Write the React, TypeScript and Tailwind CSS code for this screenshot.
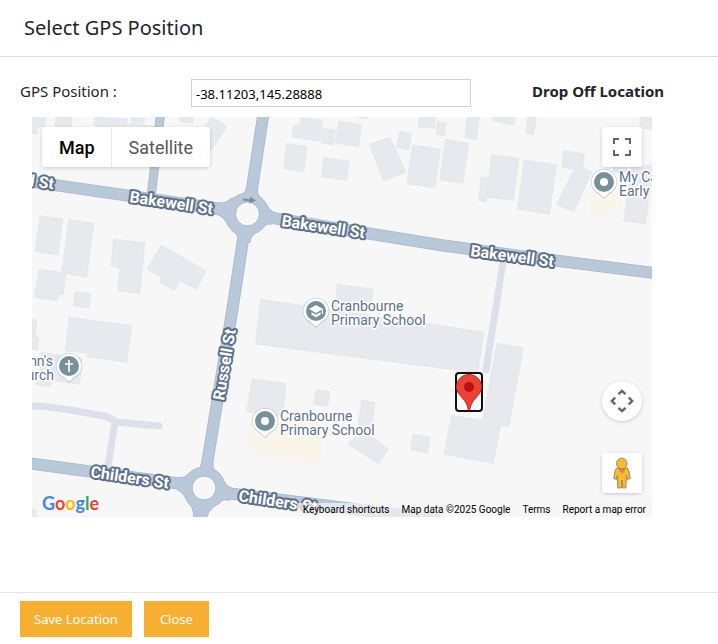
import React, { useState } from "react";

type Pin = { x: number; y: number; kind: "dot" | "school" | "church" };

const pins: Pin[] = [
  { x: 316, y: 311, kind: "school" },
  { x: 265, y: 421, kind: "dot" },
  { x: 69, y: 366, kind: "church" },
  { x: 604, y: 182, kind: "dot" },
];

const streets = [
  { x: -30, y: 177, angle: 8.5, name: "Bakewell St" },
  { x: 129, y: 202, angle: 8.5, name: "Bakewell St" },
  { x: 281, y: 226, angle: 8.5, name: "Bakewell St" },
  { x: 470, y: 256, angle: 7.5, name: "Bakewell St" },
  { x: 224, y: 401, angle: -80.5, name: "Russell St" },
  { x: 90, y: 477, angle: 8.5, name: "Childers St" },
  { x: 238, y: 501, angle: 8.5, name: "Childers St" },
];

const places = [
  { x: 331, y: 311, lines: ["Cranbourne", "Primary School"] },
  { x: 280, y: 421, lines: ["Cranbourne", "Primary School"] },
  { x: 619, y: 182, lines: ["My Canvas", "Early Learning"] },
];

// Building footprints, grouped by map tile; each tile is drawn at three units per pixel.
const tiles = [
  {
    at: "translate(30 115) scale(0.3333)",
    shapes: [
      "5,5 48,5 45,35 22,35 20,57 5,55",
      "78,5 125,5 125,45 72,45",
      "195,5 240,10 292,12 290,45 240,45 192,30",
      "305,8 345,10 340,25 303,20",
      "298,24 380,35 380,45 296,45",
      "450,5 490,5 488,24 448,20",
      "545,5 590,35 540,112 520,40",
      "30,302 98,312 84,420 15,410",
      "117,314 191,325 170,486 95,474",
      "28,462 108,475 100,538 86,536 82,558 13,547",
      "135,530 182,537 178,579 131,573",
      "250,373 345,383 329,535 263,527 270,458 244,454",
      "394,390 528,468 499,524 450,497 434,526 389,503 392,487 352,462",
    ],
  },
  {
    at: "translate(230 115) scale(0.3333)",
    shapes: [
      "213,8 278,16 270,78 186,66 192,30 209,32",
      "280,40 316,45 310,90 274,84",
      "327,18 395,30 386,96 316,84",
      "169,86 230,94 222,170 162,160",
      "281,128 357,138 350,196 275,186",
      "418,88 480,67 528,172 460,197",
      "510,48 545,56 536,105 500,95",
      "568,5 615,5 614,40 564,36",
      "380,5 410,5 410,11",
      "548,90 631,103 615,218 531,206",
      "322,508 428,522 424,590 316,580",
      "92,553 761,651 744,774 77,687",
    ],
  },
  {
    at: "translate(440 115) scale(0.3333)",
    shapes: [
      "17,72 86,85 68,205 0,194",
      "-8,20 18,24 12,63 -12,58",
      "82,5 118,5 110,74 74,68",
      "158,5 225,5 222,30 185,24 160,17",
      "263,5 289,5 280,60 259,55",
      "155,120 236,130 220,256 140,246",
      "124,186 146,188 138,260 116,257",
      "253,135 350,150 328,298 232,283",
      "372,107 434,117 428,155 404,150 400,162 366,157",
      "410,149 456,172 400,291 350,268",
      "600,5 636,5 636,43 600,38",
      "520,140 560,140 560,178 520,170",
      "574,150 640,152 616,327 552,317",
    ],
  },
  {
    at: "translate(30 310) scale(0.3333)",
    shapes: [
      "118,22 305,47 290,157 172,140 174,130 106,122",
      "5,28 20,30 16,80 27,84 22,120 5,117",
      "35,127 155,145 155,180 148,223 75,212 66,212 60,230 18,224 30,190",
      "5,597 20,600 18,625 5,625",
    ],
  },
  {
    at: "translate(230 310) scale(0.3333)",
    shapes: [
      "66,207 168,221 158,320 50,305",
      "258,239 300,245 293,289 251,282",
      "395,271 435,277 425,350 385,343",
      "354,402 385,370 425,380 475,418 446,462",
      "549,373 600,382 593,430 542,420",
    ],
  },
  {
    at: "translate(440 310) scale(0.3333)",
    shapes: ["171,100 250,114 206,351 182,346 160,460 12,433 35,316 128,332"],
  },
];

const roads = [
  { d: "M20 180L217 208.5", w: 12 },
  { d: "M273 218L440 245L520 256L670 275", w: 12 },
  { d: "M217 208.5L247 214L273 218", w: 12 },
  { d: "M264 110L251 195L247 214L243 240L232 312L206 470L204 488L199 525", w: 12 },
  { d: "M20 462L182 484L204 488L230 493.5L330 506L440 520", w: 12 },
  { d: "M161 110L151 198", w: 9 },
];

const roundabouts = [
  { x: 247.5, y: 214 },
  { x: 204, y: 488 },
];

const flares = [
  "M246 190L257 190Q257 195 261 198Q266 203 269 209L273 212L271 224Q265 223 260 229Q250 235 250 242L238 242Q240 235 233 231Q228 226 226 221Q222 215 216 214L218 203Q226 204 231 199Q246 195 246 190Z",
  "M202 464L213 464Q211 469 217 472Q222 476 224 482Q227 487 231 488L229 500Q222 498 219 503Q208 508 206 519L194 519Q195 508 188 502Q184 492 178 490L180 478Q186 478 190 473Q201 470 202 464Z",
];

function MapPin({ x, y, kind }: Pin) {
  return (
    <g transform={`translate(${x} ${y})`}>
      <path
        d="M0 16.500C-1.500 16.500-2.500 14.500-4 13C-8 10.500-13 7-13 0A13 13 0 0 1 13 0C13 7 8 10.500 4 13C2.500 14.500 1.500 16.500 0 16.500Z"
        fill="#b4c1d2"
      />
      <path
        d="M0 15.500C-1.500 15.500-2.500 13.500-4 12C-8 9.500-12.500 6.500-12.500 0A12.500 12.500 0 0 1 12.500 0C12.500 6.500 8 9.500 4 12C2.500 13.500 1.500 15.500 0 15.500Z"
        fill="#fff"
      />
      <circle r="10" fill="#78909c" />
      {kind === "dot" && <circle r="4" fill="#fff" />}
      {kind === "school" && (
        <g fill="#fff">
          <path d="M0-6L-7-2L0 2L5.800-1.300V3H7V-2Z" />
          <path d="M-4.500 1.200V3.800L0 6.300L4.500 3.800V1.200L0 3.700Z" />
        </g>
      )}
      {kind === "church" && <path d="M-.8-6H.8V-2.800H4V-1.200H.8V6H-.8V-1.200H-4V-2.800H-.8Z" fill="#fff" />}
    </g>
  );
}

function MapDrawing() {
  return (
    <svg
      className="block h-full w-full"
      viewBox="32 117 620 400"
      preserveAspectRatio="xMinYMin slice"
      aria-label="Street map"
    >
      <g fill="#faf5e9">
        <path d="M251 413L324 425L320 464L247 452Z" />
        <path d="M592 190L622 195L620 211L608 210L606 217L589 214Z" />
      </g>
      {tiles.map((tile) => (
        <g key={tile.at} transform={tile.at} fill="#e8e9ee" stroke="#e0e2e9" strokeWidth="2">
          {tile.shapes.map((points) => (
            <polygon key={points} points={points} />
          ))}
        </g>
      ))}
      <g fill="none" stroke="#dbe0ea" strokeWidth="7" strokeLinecap="round" strokeLinejoin="round">
        <path d="M503 262L486 370" />
        <path d="M28 407Q38 405 48 407L70 410L104 416Q109 417 116 422L159 426" />
        <path d="M115 422L108 466" />
      </g>
      <g fill="none" stroke="#a3b7c9">
        {roads.map((road) => (
          <path key={road.d} d={road.d} strokeWidth={road.w} />
        ))}
        {flares.map((d) => (
          <path key={d} d={d} strokeWidth="1.500" />
        ))}
        {roundabouts.map((r) => (
          <circle key={r.x} cx={r.x} cy={r.y} r="20.500" strokeWidth="1.500" />
        ))}
      </g>
      <g fill="#b9c9d9">
        {flares.map((d) => (
          <path key={d} d={d} />
        ))}
        {roundabouts.map((r) => (
          <circle key={r.x} cx={r.x} cy={r.y} r="20.500" />
        ))}
      </g>
      <g fill="none" stroke="#b9c9d9">
        {roads.map((road) => (
          <path key={road.d} d={road.d} strokeWidth={road.w - 1.5} />
        ))}
      </g>
      <g fill="#f7f7f7" stroke="#a3b7c9">
        {roundabouts.map((r) => (
          <circle key={r.x} cx={r.x} cy={r.y} r="12" />
        ))}
      </g>
      <path d="M243 198.500L250 199.200V196.500L256 200.500L249.500 203.500V201.200L243 200.500Z" fill="#78909c" />
      <g
        className="font-['Roboto',sans-serif] text-[16px] font-bold"
        fill="#fff"
        stroke="#5b708a"
        strokeWidth="4"
        strokeLinejoin="round"
        paintOrder="stroke"
      >
        {streets.map((s) => (
          <text key={`${s.x}-${s.y}`} transform={`translate(${s.x} ${s.y}) rotate(${s.angle})`}>
            {s.name}
          </text>
        ))}
      </g>
      {pins.map((p) => (
        <MapPin key={`${p.x}-${p.y}`} {...p} />
      ))}
      <g
        className="font-['Roboto',sans-serif] text-[14px]"
        fill="#5b728c"
        stroke="#fff"
        strokeWidth="3"
        strokeLinejoin="round"
        paintOrder="stroke"
      >
        {places.map((p) => (
          <text key={`${p.x}-${p.y}`}>
            <tspan x={p.x} y={p.y}>
              {p.lines[0]}
            </tspan>
            <tspan x={p.x} y={p.y + 14}>
              {p.lines[1]}
            </tspan>
          </text>
        ))}
        <text textAnchor="end">
          <tspan x="53" y="366">
            St John's
          </tspan>
          <tspan x="54" y="380">
            Church
          </tspan>
        </text>
      </g>
    </svg>
  );
}

function GoogleLogo() {
  return (
    <a
      href="#google"
      aria-label="Google"
      className="absolute bottom-0 left-2.5 font-['Lato',sans-serif] text-[18px] leading-7 font-bold"
    >
      <span className="text-[#4285f4]">G</span>
      <span className="text-[#ea4335]">o</span>
      <span className="text-[#fbbc04]">o</span>
      <span className="text-[#4285f4]">g</span>
      <span className="text-[#34a853]">l</span>
      <span className="text-[#ea4335]">e</span>
    </a>
  );
}

function MapView() {
  return (
    <div className="relative h-[400px] overflow-hidden bg-[#f7f7f7] font-['Roboto',sans-serif]">
      <MapDrawing />

      <button
        type="button"
        aria-label="Selected position"
        className="absolute top-[255px] left-[423px] flex h-10 w-7 items-center justify-center rounded-[4px] border-2 border-[#101010]"
      >
        <svg viewBox="0 0 26 37" className="h-[37px] w-[26px] shrink-0">
          <path
            d="M13 .5C6 .5.500 6 .500 13C.500 17 2.500 19.500 5 22.500C8.500 26.500 11 29 12.200 35.500Q12.400 36.500 13 36.500T13.800 35.500C15 29 17.500 26.500 21 22.500C23.500 19.500 25.500 17 25.500 13C25.500 6 20 .5 13 .5Z"
            fill="#ea4335"
            stroke="#c5221f"
          />
          <circle cx="13" cy="13" r="5" fill="#b31412" />
        </svg>
      </button>

      <div className="absolute top-2.5 left-2.5 flex h-10 rounded-xs bg-white text-[18px] shadow-[0_1px_4px_-1px_rgba(0,0,0,0.3)]">
        <button type="button" className="pr-4 pl-[17px] font-medium text-black">
          Map
        </button>
        <button type="button" className="border-l border-[#e8e8e8] px-[17px] text-[#565656]">
          Satellite
        </button>
      </div>

      <button
        type="button"
        aria-label="Toggle fullscreen view"
        className="absolute top-2.5 right-2.5 flex size-10 items-center justify-center rounded-xs bg-white shadow-[0_1px_4px_-1px_rgba(0,0,0,0.3)]"
      >
        <svg viewBox="0 0 18 18" className="size-[18px]" fill="#666">
          <path d="M0 0V6H2V2H6V0ZM16 0H12V2H16V6H18V0ZM16 16H12V18H18V12H16ZM2 12H0V18H6V16H2Z" />
        </svg>
      </button>

      <button
        type="button"
        aria-label="Map camera controls"
        className="absolute right-2.5 bottom-24 flex size-10 items-center justify-center rounded-full bg-white shadow-[0_1px_4px_-1px_rgba(0,0,0,0.3)]"
      >
        <svg viewBox="0 0 24 24" className="size-6" fill="none" stroke="#666" strokeWidth="2.500">
          <path d="M8.500 5.200L12 1.900L15.500 5.200M8.500 18.800L12 22.100L15.500 18.800M5.200 8.500L1.900 12L5.200 15.500M18.800 8.500L22.100 12L18.800 15.500" />
        </svg>
      </button>

      <button
        type="button"
        aria-label="Street View"
        className="absolute right-2.5 bottom-6 flex size-10 items-center justify-center rounded-xs bg-white shadow-[0_1px_4px_-1px_rgba(0,0,0,0.3)]"
      >
        <svg viewBox="0 0 18 32" className="h-8 w-[18px]" fill="#fbbc2c" stroke="#80796a" strokeWidth=".8">
          <path d="M4 11H14Q15.500 12 16 14L17.300 21.500L14.500 22.500L13.500 18.500L12.800 31H9.700L9 23L8.300 31H4.800L4.300 18.500L3.500 22.500L.7 21.500L2 14Q2.500 12 4 11Z" />
          <path d="M4.500 11.200H13.500L9 17Z" fill="#e8853a" stroke="none" />
          <circle cx="8.800" cy="6.500" r="5.300" />
        </svg>
      </button>

      <GoogleLogo />

      <div className="absolute right-0 bottom-0 flex h-3.5 bg-[#f5f5f5]/70 text-[10px] leading-[14px] text-black">
        <button type="button" className="px-1.5">
          Keyboard shortcuts
        </button>
        <span className="px-1.5">Map data ©2025 Google</span>
        <a href="#terms" className="px-1.5">
          Terms
        </a>
        <a href="#report" className="px-1.5">
          Report a map error
        </a>
      </div>
    </div>
  );
}

export default function App() {
  const [position, setPosition] = useState("-38.11203,145.28888");

  return (
    <main className="bg-white font-['Noto_Sans',sans-serif] text-[#212529]">
      <header className="border-b border-[#dcdcdc] px-6 py-3.5">
        <h1 className="text-[20px] leading-7">Select GPS Position</h1>
      </header>

      <section className="pt-[22px] pb-[75px]">
        <div className="flex px-5">
          <label htmlFor="gps" className="w-[171px] shrink-0 text-[15px] leading-6">
            GPS Position :
          </label>
          <input
            id="gps"
            value={position}
            onChange={(e) => setPosition(e.target.value)}
            className="h-7 w-[280px] border border-[#d0d0d0] px-1 pt-0.5 text-[13px] text-black outline-none"
          />
          <strong className="ml-[61px] text-[15px] leading-6 font-bold">Drop Off Location</strong>
        </div>
        <div className="mt-2.5 mr-[66px] ml-8">
          <MapView />
        </div>
      </section>

      <footer className="flex gap-3 border-t border-[#e5e5e5] px-5 py-2 text-[13px] text-white">
        <button type="button" className="h-9 bg-[#f7af31] px-3.5 pt-0.5">
          Save Location
        </button>
        <button type="button" className="h-9 bg-[#f7af31] px-4 pt-0.5">
          Close
        </button>
      </footer>
    </main>
  );
}
